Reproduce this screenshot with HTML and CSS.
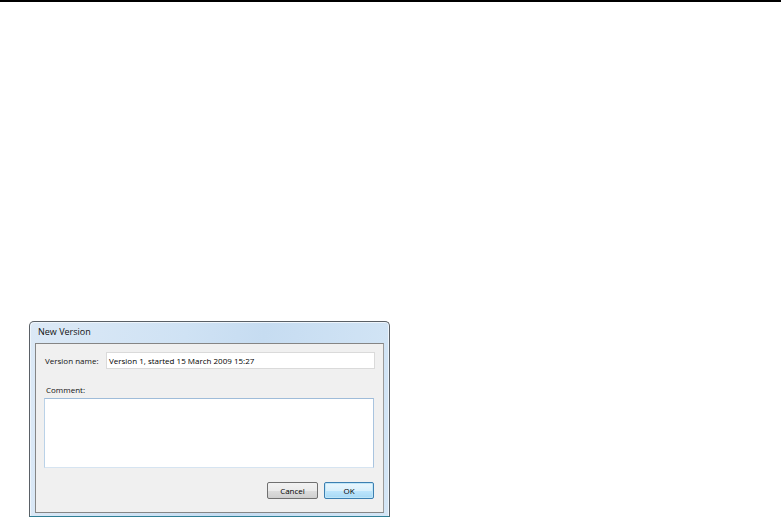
FILE: index.html
```html
<!DOCTYPE html>
<html>
<head>
<meta charset="utf-8">
<link rel="stylesheet" href="styles.css">
</head>
<body>
<div class="topbar"></div>
<div class="window">
  <div class="titlebar">New Version</div>
  <div class="panel">
    <div class="row">
      <span class="label">Version name:</span>
      <div class="input">Version 1, started 15 March 2009 15:27</div>
    </div>
    <div class="comment-label">Comment:</div>
    <div class="textarea"></div>
    <div class="buttons">
      <div class="btn btn-cancel">Cancel</div>
      <div class="btn btn-default">OK</div>
    </div>
  </div>
</div>
</body>
</html>
```
FILE: styles.css
```css
html, body {
  margin: 0;
  padding: 0;
  background: #ffffff;
  width: 783px;
  height: 517px;
  overflow: hidden;
  font-family: "Open Sans", "Noto Sans", "DejaVu Sans", sans-serif;
}
.topbar {
  height: 2px;
  width: 781px;
  background: #000;
}
.window {
  position: absolute;
  left: 29px;
  top: 321px;
  width: 361px;
  height: 196px;
  border: 1px solid #5a6066;
  border-bottom-color: #2f7f95;
  border-radius: 5px 5px 0 0;
  background: linear-gradient(100deg, #dce9f6 0%, #cfe2f4 40%, #c6dcf1 60%, #d4e6f6 100%);
  box-shadow: inset 1px 1px 0 #eef5fc, inset -1px 0 0 #eef5fc;
  display: flex;
  flex-direction: column;
  padding: 0 5px 3px 5px;
  box-sizing: border-box;
}
.titlebar {
  height: 21px;
  line-height: 19px;
  padding-left: 3px;
  font-size: 9px;
  color: #111;
}
.panel {
  flex: 1;
  background: #f0f0f0;
  border: 1px solid #858585;
  border-right-color: #9a9a9a;
  padding: 8px 8px 0 8px;
  display: flex;
  flex-direction: column;
}
.row {
  display: flex;
  align-items: center;
  height: 17px;
}
.label {
  width: 61px;
  font-size: 8px;
  color: #111;
  padding-left: 1px;
}
.input {
  flex: 1;
  height: 15px;
  border: 1px solid #dadada;
  background: #fff;
  font-size: 8px;
  line-height: 15px;
  padding-left: 2px;
  color: #000;
}
.comment-label {
  margin-top: 15px;
  padding-left: 2px;
  font-size: 8px;
  color: #111;
  height: 11px;
  line-height: 11px;
}
.textarea {
  margin-top: 3px;
  height: 68px;
  margin-right: 1px;
  border: 1px solid #a9c4df;
  border-top-color: #9fbcd9;
  border-left-color: #bad2e8;
  border-bottom-color: #d6e4f1;
  background: #fff;
}
.buttons {
  display: flex;
  justify-content: flex-end;
  gap: 6px;
  margin-top: 14px;
  margin-right: 1px;
}
.btn {
  width: 48px;
  height: 15px;
  border: 1px solid #707070;
  border-radius: 2px;
  background: linear-gradient(#f2f2f2 0%, #ebebeb 50%, #dddddd 51%, #cfcfcf 100%);
  font-size: 8px;
  line-height: 15px;
  text-align: center;
  color: #000;
}
.btn-cancel {
  width: 49px;
}
.btn-default {
  border-color: #3c7fb1;
  box-shadow: inset 0 0 0 1px #bfe6f8;
  background: linear-gradient(#eaf6fd 0%, #d9f0fc 50%, #bee6fd 51%, #a7d9f5 100%);
}
```
